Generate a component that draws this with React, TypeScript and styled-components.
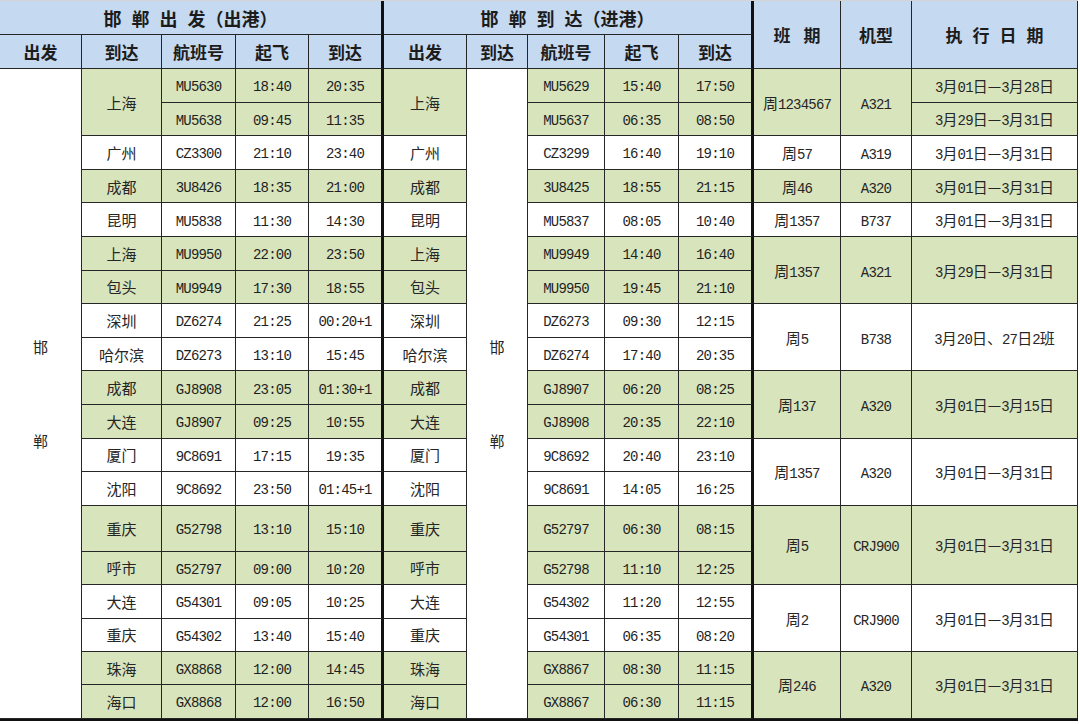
import React from 'react';
import styled, { createGlobalStyle } from 'styled-components';

const GlobalStyle = createGlobalStyle`
  html, body {
    margin: 0;
    padding: 0;
    background: #fff;
  }
  body {
    font-family: "Noto Sans CJK SC", sans-serif;
    color: #222;
  }
`;

type Tone = 'blue' | 'green' | 'white';

const toneColor: Record<Tone, string> = {
  blue: '#c5d9f1',
  green: '#d8e4bc',
  white: '#ffffff',
};

const Sheet = styled.div`
  display: grid;
  grid-template-columns: 82px 80px 74px 73px 75px 83px 61px 77px 74px 75px 87px 71px 166px;
  grid-template-rows: 34px 34px repeat(13, 33.6px) 46px repeat(5, 33.4px);
  width: 1078px;
  border-top: 1px solid #d4d4d4;
  border-bottom: 2px solid #111;
`;

const Cell = styled.div<{ $tone?: Tone; $rows?: number; $cols?: number; $thick?: boolean }>`
  box-sizing: border-box;
  display: flex;
  align-items: center;
  justify-content: center;
  grid-row: span ${(p) => p.$rows ?? 1};
  grid-column: span ${(p) => p.$cols ?? 1};
  background: ${(p) => toneColor[p.$tone ?? 'white']};
  border-right: ${(p) => (p.$thick ? '3px solid #111' : '1px solid #262626')};
  border-bottom: 1px solid #262626;
  white-space: nowrap;
  overflow: hidden;
`;

const HeadCell = styled(Cell)`
  font-size: 17px;
  font-weight: 700;
  color: #1c1c1c;
`;

const TitleCell = styled(HeadCell)`
  font-size: 18px;
`;

const Spaced = styled.span<{ $gap: number; $pad?: boolean }>`
  letter-spacing: ${(p) => p.$gap}px;
  padding-left: ${(p) => (p.$pad ? p.$gap : 0)}px;
`;

const CityCell = styled(Cell)`
  font-size: 15px;
  color: #262626;
`;

const CodeCell = styled(Cell)`
  padding-top: 4px;
  font-family: "Liberation Mono", monospace;
  font-size: 14px;
  letter-spacing: -0.8px;
  color: #1f1f1f;
`;

const MixedCell = styled(Cell)`
  font-size: 15px;
  color: #262626;
`;

const Latin = styled.span`
  font-family: "Liberation Mono", monospace;
  font-size: 14px;
  letter-spacing: -0.8px;
`;

const HomeCell = styled(Cell)`
  flex-direction: column;
  gap: 73px;
  font-size: 15px;
  color: #262626;
`;

type Leg = { city?: string; span?: number; no: string; dep: string; arr: string };
type Plan = { days: string; plane: string; span: number; dates: string[] };

const outbound: Leg[] = [
  { city: '上海', span: 2, no: 'MU5630', dep: '18:40', arr: '20:35' },
  { no: 'MU5638', dep: '09:45', arr: '11:35' },
  { city: '广州', no: 'CZ3300', dep: '21:10', arr: '23:40' },
  { city: '成都', no: '3U8426', dep: '18:35', arr: '21:00' },
  { city: '昆明', no: 'MU5838', dep: '11:30', arr: '14:30' },
  { city: '上海', no: 'MU9950', dep: '22:00', arr: '23:50' },
  { city: '包头', no: 'MU9949', dep: '17:30', arr: '18:55' },
  { city: '深圳', no: 'DZ6274', dep: '21:25', arr: '00:20+1' },
  { city: '哈尔滨', no: 'DZ6273', dep: '13:10', arr: '15:45' },
  { city: '成都', no: 'GJ8908', dep: '23:05', arr: '01:30+1' },
  { city: '大连', no: 'GJ8907', dep: '09:25', arr: '10:55' },
  { city: '厦门', no: '9C8691', dep: '17:15', arr: '19:35' },
  { city: '沈阳', no: '9C8692', dep: '23:50', arr: '01:45+1' },
  { city: '重庆', no: 'G52798', dep: '13:10', arr: '15:10' },
  { city: '呼市', no: 'G52797', dep: '09:00', arr: '10:20' },
  { city: '大连', no: 'G54301', dep: '09:05', arr: '10:25' },
  { city: '重庆', no: 'G54302', dep: '13:40', arr: '15:40' },
  { city: '珠海', no: 'GX8868', dep: '12:00', arr: '14:45' },
  { city: '海口', no: 'GX8868', dep: '12:00', arr: '16:50' },
];

const inbound: Leg[] = [
  { city: '上海', span: 2, no: 'MU5629', dep: '15:40', arr: '17:50' },
  { no: 'MU5637', dep: '06:35', arr: '08:50' },
  { city: '广州', no: 'CZ3299', dep: '16:40', arr: '19:10' },
  { city: '成都', no: '3U8425', dep: '18:55', arr: '21:15' },
  { city: '昆明', no: 'MU5837', dep: '08:05', arr: '10:40' },
  { city: '上海', no: 'MU9949', dep: '14:40', arr: '16:40' },
  { city: '包头', no: 'MU9950', dep: '19:45', arr: '21:10' },
  { city: '深圳', no: 'DZ6273', dep: '09:30', arr: '12:15' },
  { city: '哈尔滨', no: 'DZ6274', dep: '17:40', arr: '20:35' },
  { city: '成都', no: 'GJ8907', dep: '06:20', arr: '08:25' },
  { city: '大连', no: 'GJ8908', dep: '20:35', arr: '22:10' },
  { city: '厦门', no: '9C8692', dep: '20:40', arr: '23:10' },
  { city: '沈阳', no: '9C8691', dep: '14:05', arr: '16:25' },
  { city: '重庆', no: 'G52797', dep: '06:30', arr: '08:15' },
  { city: '呼市', no: 'G52798', dep: '11:10', arr: '12:25' },
  { city: '大连', no: 'G54302', dep: '11:20', arr: '12:55' },
  { city: '重庆', no: 'G54301', dep: '06:35', arr: '08:20' },
  { city: '珠海', no: 'GX8867', dep: '08:30', arr: '11:15' },
  { city: '海口', no: 'GX8867', dep: '06:30', arr: '11:15' },
];

const plans: Plan[] = [
  { days: '周1234567', plane: 'A321', span: 2, dates: ['3月01日—3月28日', '3月29日—3月31日'] },
  { days: '周57', plane: 'A319', span: 1, dates: ['3月01日—3月31日'] },
  { days: '周46', plane: 'A320', span: 1, dates: ['3月01日—3月31日'] },
  { days: '周1357', plane: 'B737', span: 1, dates: ['3月01日—3月31日'] },
  { days: '周1357', plane: 'A321', span: 2, dates: ['3月29日—3月31日'] },
  { days: '周5', plane: 'B738', span: 2, dates: ['3月20日、27日2班'] },
  { days: '周137', plane: 'A320', span: 2, dates: ['3月01日—3月15日'] },
  { days: '周1357', plane: 'A320', span: 2, dates: ['3月01日—3月31日'] },
  { days: '周5', plane: 'CRJ900', span: 2, dates: ['3月01日—3月31日'] },
  { days: '周2', plane: 'CRJ900', span: 2, dates: ['3月01日—3月31日'] },
  { days: '周246', plane: 'A320', span: 2, dates: ['3月01日—3月31日'] },
];

const Mixed = ({ text }: { text: string }) => (
  <span>
    {text.split(/([0-9A-Za-z+]+)/).map((part, i) =>
      /^[0-9A-Za-z+]+$/.test(part) ? <Latin key={i}>{part}</Latin> : part,
    )}
  </span>
);

// which plan each row belongs to, and the row where it starts
const rowPlan: { plan: Plan; index: number; start: number }[] = [];
plans.forEach((plan, index) => {
  const start = rowPlan.length;
  for (let k = 0; k < plan.span; k++) rowPlan.push({ plan, index, start });
});

const Home = () => (
  <>
    <span>邯</span>
    <span>郸</span>
  </>
);

const buildRows = () => {
  const cells: React.ReactNode[] = [];
  for (let r = 0; r < rowPlan.length; r++) {
    const { plan, index, start } = rowPlan[r];
    const tone: Tone = index % 2 === 0 ? 'green' : 'white';
    const out = outbound[r];
    const inn = inbound[r];

    if (r === 0) {
      cells.push(
        <HomeCell key="home-out" $rows={19}>
          <Home />
        </HomeCell>,
      );
    }
    if (out.city) {
      cells.push(
        <CityCell key={`oc${r}`} $tone={tone} $rows={out.span}>
          {out.city}
        </CityCell>,
      );
    }
    cells.push(<CodeCell key={`on${r}`} $tone={tone}>{out.no}</CodeCell>);
    cells.push(<CodeCell key={`od${r}`} $tone={tone}>{out.dep}</CodeCell>);
    cells.push(<CodeCell key={`oa${r}`} $tone={tone} $thick>{out.arr}</CodeCell>);

    if (inn.city) {
      cells.push(
        <CityCell key={`ic${r}`} $tone={tone} $rows={inn.span}>
          {inn.city}
        </CityCell>,
      );
    }
    if (r === 0) {
      cells.push(
        <HomeCell key="home-in" $rows={19}>
          <Home />
        </HomeCell>,
      );
    }
    cells.push(<CodeCell key={`in${r}`} $tone={tone}>{inn.no}</CodeCell>);
    cells.push(<CodeCell key={`id${r}`} $tone={tone}>{inn.dep}</CodeCell>);
    cells.push(<CodeCell key={`ia${r}`} $tone={tone} $thick>{inn.arr}</CodeCell>);

    const split = plan.dates.length === plan.span;
    if (r === start) {
      cells.push(
        <MixedCell key={`pd${r}`} $tone={tone} $rows={plan.span}>
          <Mixed text={plan.days} />
        </MixedCell>,
      );
      cells.push(
        <MixedCell key={`pp${r}`} $tone={tone} $rows={plan.span}>
          <Mixed text={plan.plane} />
        </MixedCell>,
      );
      cells.push(
        <MixedCell key={`pt${r}`} $tone={tone} $rows={split ? 1 : plan.span}>
          <Mixed text={plan.dates[0]} />
        </MixedCell>,
      );
    } else if (split) {
      cells.push(
        <MixedCell key={`pt${r}`} $tone={tone}>
          <Mixed text={plan.dates[r - start]} />
        </MixedCell>,
      );
    }
  }
  return cells;
};

const subHeads = ['出发', '到达', '航班号', '起飞', '到达'];

export default function App() {
  return (
    <>
      <GlobalStyle />
      <Sheet>
        <TitleCell $tone="blue" $cols={5} $thick>
          <Spaced $gap={10}>邯郸出</Spaced>发（出港）
        </TitleCell>
        <TitleCell $tone="blue" $cols={5} $thick>
          <Spaced $gap={10}>邯郸到</Spaced>达（进港）
        </TitleCell>
        <HeadCell $tone="blue" $rows={2}>
          <Spaced $gap={13} $pad>班期</Spaced>
        </HeadCell>
        <HeadCell $tone="blue" $rows={2}>
          机型
        </HeadCell>
        <HeadCell $tone="blue" $rows={2}>
          <Spaced $gap={10} $pad>执行日期</Spaced>
        </HeadCell>
        {[...subHeads, ...subHeads].map((label, i) => (
          <HeadCell key={i} $tone="blue" $thick={i === 4 || i === 9}>
            {label}
          </HeadCell>
        ))}
        {buildRows()}
      </Sheet>
    </>
  );
}
